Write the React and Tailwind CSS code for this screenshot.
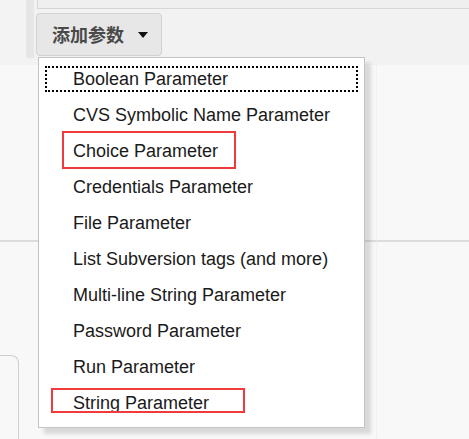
import React from 'react';

const items = [
  'Boolean Parameter',
  'CVS Symbolic Name Parameter',
  'Choice Parameter',
  'Credentials Parameter',
  'File Parameter',
  'List Subversion tags (and more)',
  'Multi-line String Parameter',
  'Password Parameter',
  'Run Parameter',
  'String Parameter',
];

const App = () => {
  return (
    <div className="relative w-[469px] h-[439px] overflow-hidden bg-[#f8f8f8] font-['Liberation_Sans','Noto_Sans_CJK_SC',sans-serif]">
      {/* top band */}
      <div className="flex h-[65px] bg-[#f2f2f2]">
        <div className="w-[26px] shrink-0 bg-[#f3f3f3]" />
        <div className="w-[8px] h-[58px] shrink-0 bg-[#e6e6e6]" />
        <div className="flex-1 pl-[3px]">
          <div className="h-[9px] border-l border-b border-[#d6d6d6] bg-[#efefef]" />
          <div className="mt-[4px] ml-[-1px] w-[126px] h-[43px] flex items-center gap-[14px] pl-[15px] rounded-[4px] border border-[#d2d2d2] bg-[#e7e7e7]">
            <span className="text-[18px] font-bold text-[#4a4a4a] font-['Noto_Sans_CJK_SC',sans-serif]">添加参数</span>
            <svg width="10" height="6" viewBox="0 0 10 6"><path d="M0 0h10L5 6z" fill="#111" /></svg>
          </div>
        </div>
      </div>

      {/* lower area */}
      <div className="h-[175px]" />
      <div className="h-[2px] bg-[#dcdcdc]" />
      <div className="h-[113px]" />
      <div className="w-[19px] h-[90px] border-t border-r border-[#cfcfcf] rounded-tr-[8px] bg-[#f8f8f8]" />

      {/* faint divider on right */}
      <div className="absolute left-[376px] top-[65px] bottom-0 border-l border-dotted border-[#ececec]" />

      {/* dropdown menu */}
      <div className="absolute left-[38px] top-[57px] w-[327px] h-[371px] bg-white border border-[#c4c4c4] shadow-[6px_6px_4px_rgba(0,0,0,0.13)] pt-[8px] px-[6px] flex flex-col">
        <div className="h-[26px] mb-[5px] flex items-center pl-[28px] text-[18px] text-[#1a1a1a] outline-2 outline-dotted outline-black outline-offset-[-2px]">
          {items[0]}
        </div>
        {items.slice(1).map((label, i) => (
          <div key={label} className="relative h-[36px] flex items-center pl-[28px] text-[18px] text-[#1a1a1a]">
            {label}
            {i === 1 && (
              <div className="absolute left-[17px] top-[-2px] w-[174px] h-[38px] border-2 border-[#ef3b3b]" />
            )}
            {i === 8 && (
              <div className="absolute left-[6px] top-[3px] w-[194px] h-[25px] border-2 border-[#ef3b3b]" />
            )}
          </div>
        ))}
      </div>
    </div>
  );
};

export default App;
